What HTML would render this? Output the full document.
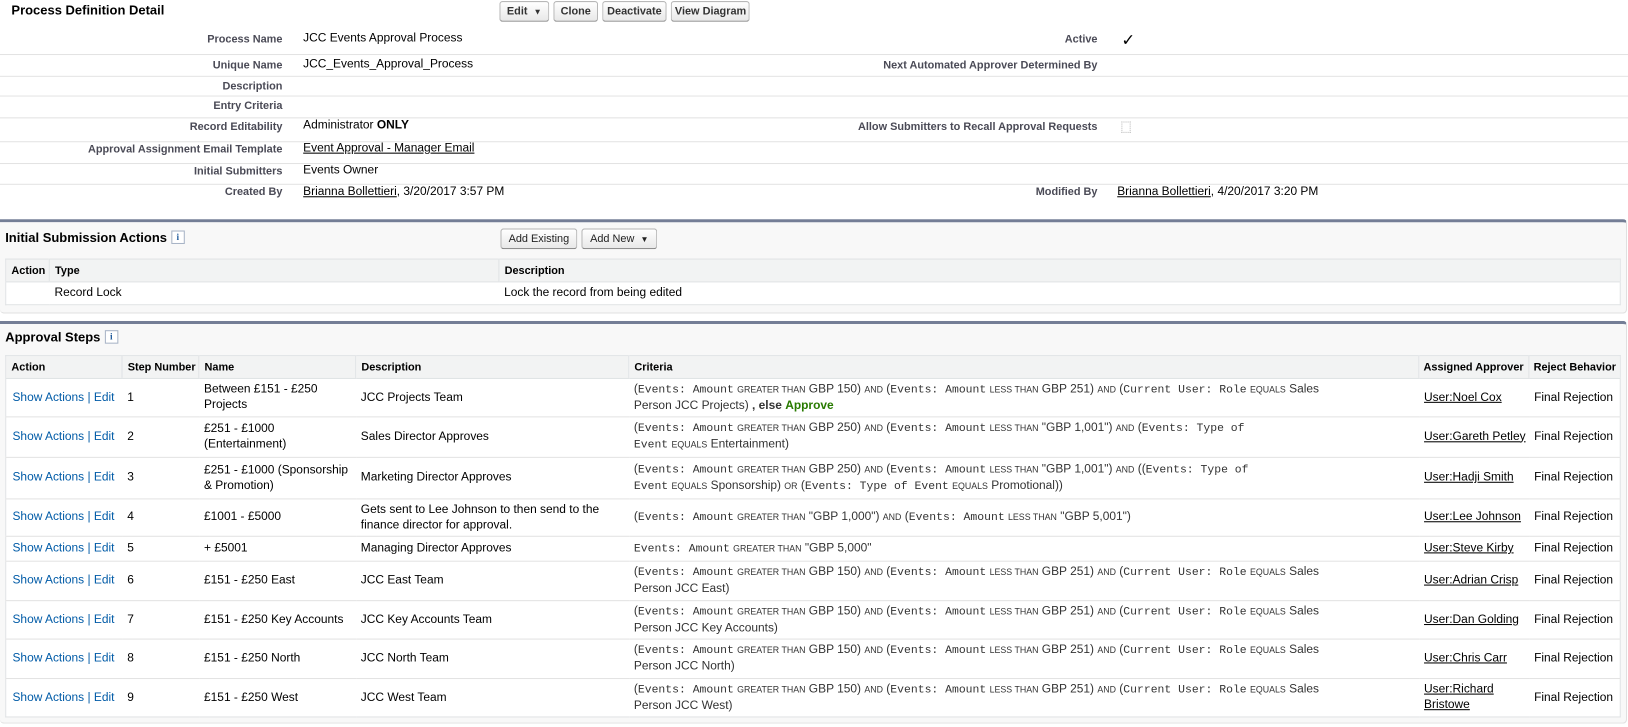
<!DOCTYPE html>
<html><head><meta charset="utf-8"><style>
*{box-sizing:border-box}
body{margin:0;width:1628px;height:727px;overflow:hidden;background:#fff;font-family:"Liberation Sans",Arial,sans-serif;color:#000;position:relative}
#w{position:absolute;left:0;top:0;width:1568px;height:700px;transform:scale(1.0383);transform-origin:0 0;font-size:11.5px}
.abs{position:absolute}
.btn{position:absolute;top:1px;height:20px;border:1px solid #b5b5b5;border-bottom-color:#7f7f7f;border-radius:3px;background:linear-gradient(#fff,#e8e8e8);font-size:10.5px;font-weight:bold;color:#333;line-height:18px;text-align:center;padding:0 3px;white-space:nowrap}
.lbl{position:absolute;text-align:right;font-size:10.5px;font-weight:bold;color:#4a4a56;white-space:nowrap;margin-top:2px}
.val{position:absolute;font-size:11.5px;color:#000;white-space:nowrap;margin-top:2px}
.hr{position:absolute;left:0;width:1568px;height:1px;background:#e3e3e3}
a{color:#000;text-decoration:underline}
.box{position:absolute;left:0;width:1567px;background:#f8f8f8;border-top:3px solid #747e96;border-right:1px solid #e0e0e0;border-bottom:1px solid #e0e0e0;border-radius:0 4px 4px 4px}
.h2{position:absolute;font-size:12.5px;font-weight:bold;color:#000}
.info{display:inline-block;width:13px;height:13px;border:1px solid #a8b4c6;background:#fff;color:#1f5a9a;font-size:9px;line-height:11px;text-align:center;font-family:"Liberation Serif",serif;vertical-align:2px;margin-left:4px;font-weight:bold}
table{border-collapse:collapse;table-layout:fixed;position:absolute;background:#fff;border:1px solid #e0e3e5}
th{background:#f2f3f3;font-size:10.5px;font-weight:bold;text-align:left;padding:0 5px;border:1px solid #e0e3e5;border-width:0 0 1px 1px;height:22px;color:#000;white-space:nowrap;overflow:hidden}
td{font-size:11.5px;padding:0 5px;border-bottom:1px solid #e3e3e3;vertical-align:middle;line-height:15px}
.act{color:#015ba7;white-space:nowrap;padding-left:6px}
.nw{white-space:nowrap}
.m{font-family:"Liberation Mono",monospace;font-size:11px;color:#333}
.o{font-size:8.5px}
.cr{color:#333}
.g{color:#287a00;font-weight:bold}
</style></head><body><div id="w">
<div class="abs" style="left:11px;top:3px;font-size:12.5px;font-weight:bold">Process Definition Detail</div>
<div class="btn" style="left:481px;width:48px">Edit &nbsp;<span style="font-size:8px">▼</span></div>
<div class="btn" style="left:533px;width:43px">Clone</div>
<div class="btn" style="left:580px;width:62px">Deactivate</div>
<div class="btn" style="left:646px;width:76px">View Diagram</div>

<div class="lbl" style="left:0;width:272px;top:30px">Process Name</div><div class="val" style="left:292px;top:29px">JCC Events Approval Process</div>
<div class="lbl" style="left:700px;width:357px;top:30px">Active</div><div class="val" style="left:1080px;top:27px;font-size:16px">✓</div>
<div class="hr" style="top:52px"></div>
<div class="lbl" style="left:0;width:272px;top:55px">Unique Name</div><div class="val" style="left:292px;top:54px">JCC_Events_Approval_Process</div>
<div class="lbl" style="left:700px;width:357px;top:55px">Next Automated Approver Determined By</div>
<div class="hr" style="top:73px"></div>
<div class="lbl" style="left:0;width:272px;top:75px">Description</div>
<div class="hr" style="top:92px"></div>
<div class="lbl" style="left:0;width:272px;top:94px">Entry Criteria</div>
<div class="hr" style="top:113px"></div>
<div class="lbl" style="left:0;width:272px;top:114px">Record Editability</div><div class="val" style="left:292px;top:113px">Administrator <b>ONLY</b></div>
<div class="lbl" style="left:700px;width:357px;top:114px">Allow Submitters to Recall Approval Requests</div>
<div class="abs" style="left:1080px;top:117px;width:9px;height:11px;border:1px dotted #bbb"></div>
<div class="hr" style="top:136px"></div>
<div class="lbl" style="left:0;width:272px;top:136px">Approval Assignment Email Template</div><div class="val" style="left:292px;top:135px"><a>Event Approval - Manager Email</a></div>
<div class="hr" style="top:157px"></div>
<div class="lbl" style="left:0;width:272px;top:157px">Initial Submitters</div><div class="val" style="left:292px;top:156px">Events Owner</div>
<div class="hr" style="top:177px"></div>
<div class="lbl" style="left:0;width:272px;top:177px">Created By</div><div class="val" style="left:292px;top:177px"><a>Brianna Bollettieri</a>, 3/20/2017 3:57 PM</div>
<div class="lbl" style="left:700px;width:357px;top:177px">Modified By</div><div class="val" style="left:1076px;top:177px"><a>Brianna Bollettieri</a>, 4/20/2017 3:20 PM</div>

<div class="box" style="top:211px;height:91px"></div>
<div class="h2" style="left:5px;top:222px">Initial Submission Actions<span class="info">i</span></div>
<div class="btn" style="left:482px;top:220px;width:74px;font-weight:normal;color:#222">Add Existing</div>
<div class="btn" style="left:560px;top:220px;width:73px;font-weight:normal;color:#222">Add New &nbsp;<span style="font-size:8px">▼</span></div>
<table style="left:5px;top:249px;width:1556px">
<colgroup><col style="width:42px"><col style="width:433px"><col></colgroup>
<tr><th style="border-left:0">Action</th><th>Type</th><th>Description</th></tr>
<tr><td style="height:22px;border:0"></td><td style="border:0;padding-left:5px">Record Lock</td><td style="border:0">Lock the record from being edited</td></tr>
</table>

<div class="box" style="top:309px;height:388px"></div>
<div class="h2" style="left:5px;top:318px">Approval Steps<span class="info">i</span></div>
<table style="left:5px;top:342px;width:1556px">
<colgroup><col style="width:112px"><col style="width:74px"><col style="width:151px"><col style="width:263px"><col style="width:761px"><col style="width:106px"><col></colgroup>
<tr><th style="border-left:0">Action</th><th>Step Number</th><th>Name</th><th>Description</th><th>Criteria</th><th style="padding:0 4px">Assigned Approver</th><th style="padding:0 4px">Reject Behavior</th></tr>
<tr style="height:37px"><td class="act">Show Actions | Edit</td><td>1</td><td>Between £151 - £250 Projects</td><td>JCC Projects Team</td><td class="cr">(<span class="m">Events: Amount</span> <span class="o">GREATER THAN</span> GBP 150) <span class="o">AND</span> (<span class="m">Events: Amount</span> <span class="o">LESS THAN</span> GBP 251) <span class="o">AND</span> (<span class="m">Current User: Role</span> <span class="o">EQUALS</span> Sales<br>Person JCC Projects) <b>, else</b> <span class="g">Approve</span></td><td class="nw"><a>User:Noel Cox</a></td><td class="nw">Final Rejection</td></tr>
<tr style="height:39px"><td class="act">Show Actions | Edit</td><td>2</td><td>£251 - £1000 (Entertainment)</td><td>Sales Director Approves</td><td class="cr">(<span class="m">Events: Amount</span> <span class="o">GREATER THAN</span> GBP 250) <span class="o">AND</span> (<span class="m">Events: Amount</span> <span class="o">LESS THAN</span> "GBP 1,001") <span class="o">AND</span> (<span class="m">Events: Type of<br>Event</span> <span class="o">EQUALS</span> Entertainment)</td><td class="nw"><a>User:Gareth Petley</a></td><td class="nw">Final Rejection</td></tr>
<tr style="height:40px"><td class="act">Show Actions | Edit</td><td>3</td><td>£251 - £1000 (Sponsorship &amp; Promotion)</td><td>Marketing Director Approves</td><td class="cr">(<span class="m">Events: Amount</span> <span class="o">GREATER THAN</span> GBP 250) <span class="o">AND</span> (<span class="m">Events: Amount</span> <span class="o">LESS THAN</span> "GBP 1,001") <span class="o">AND</span> ((<span class="m">Events: Type of<br>Event</span> <span class="o">EQUALS</span> Sponsorship) <span class="o">OR</span> (<span class="m">Events: Type of Event</span> <span class="o">EQUALS</span> Promotional))</td><td class="nw"><a>User:Hadji Smith</a></td><td class="nw">Final Rejection</td></tr>
<tr style="height:36px"><td class="act">Show Actions | Edit</td><td>4</td><td>£1001 - £5000</td><td>Gets sent to Lee Johnson to then send to the finance director for approval.</td><td class="cr">(<span class="m">Events: Amount</span> <span class="o">GREATER THAN</span> "GBP 1,000") <span class="o">AND</span> (<span class="m">Events: Amount</span> <span class="o">LESS THAN</span> "GBP 5,001")</td><td class="nw"><a>User:Lee Johnson</a></td><td class="nw">Final Rejection</td></tr>
<tr style="height:24px"><td class="act">Show Actions | Edit</td><td>5</td><td>+ £5001</td><td>Managing Director Approves</td><td class="cr"><span class="m">Events: Amount</span> <span class="o">GREATER THAN</span> "GBP 5,000"</td><td class="nw"><a>User:Steve Kirby</a></td><td class="nw">Final Rejection</td></tr>
<tr style="height:38px"><td class="act">Show Actions | Edit</td><td>6</td><td>£151 - £250 East</td><td>JCC East Team</td><td class="cr">(<span class="m">Events: Amount</span> <span class="o">GREATER THAN</span> GBP 150) <span class="o">AND</span> (<span class="m">Events: Amount</span> <span class="o">LESS THAN</span> GBP 251) <span class="o">AND</span> (<span class="m">Current User: Role</span> <span class="o">EQUALS</span> Sales<br>Person JCC East)</td><td class="nw"><a>User:Adrian Crisp</a></td><td class="nw">Final Rejection</td></tr>
<tr style="height:37px"><td class="act">Show Actions | Edit</td><td>7</td><td class="nw">£151 - £250 Key Accounts</td><td>JCC Key Accounts Team</td><td class="cr">(<span class="m">Events: Amount</span> <span class="o">GREATER THAN</span> GBP 150) <span class="o">AND</span> (<span class="m">Events: Amount</span> <span class="o">LESS THAN</span> GBP 251) <span class="o">AND</span> (<span class="m">Current User: Role</span> <span class="o">EQUALS</span> Sales<br>Person JCC Key Accounts)</td><td class="nw"><a>User:Dan Golding</a></td><td class="nw">Final Rejection</td></tr>
<tr style="height:38px"><td class="act">Show Actions | Edit</td><td>8</td><td>£151 - £250 North</td><td>JCC North Team</td><td class="cr">(<span class="m">Events: Amount</span> <span class="o">GREATER THAN</span> GBP 150) <span class="o">AND</span> (<span class="m">Events: Amount</span> <span class="o">LESS THAN</span> GBP 251) <span class="o">AND</span> (<span class="m">Current User: Role</span> <span class="o">EQUALS</span> Sales<br>Person JCC North)</td><td class="nw"><a>User:Chris Carr</a></td><td class="nw">Final Rejection</td></tr>
<tr style="height:37px"><td class="act" style="border:0">Show Actions | Edit</td><td style="border:0">9</td><td style="border:0">£151 - £250 West</td><td style="border:0">JCC West Team</td><td class="cr" style="border:0">(<span class="m">Events: Amount</span> <span class="o">GREATER THAN</span> GBP 150) <span class="o">AND</span> (<span class="m">Events: Amount</span> <span class="o">LESS THAN</span> GBP 251) <span class="o">AND</span> (<span class="m">Current User: Role</span> <span class="o">EQUALS</span> Sales<br>Person JCC West)</td><td style="border:0"><a>User:Richard<br>Bristowe</a></td><td class="nw" style="border:0">Final Rejection</td></tr>
</table>
</div></body></html>
